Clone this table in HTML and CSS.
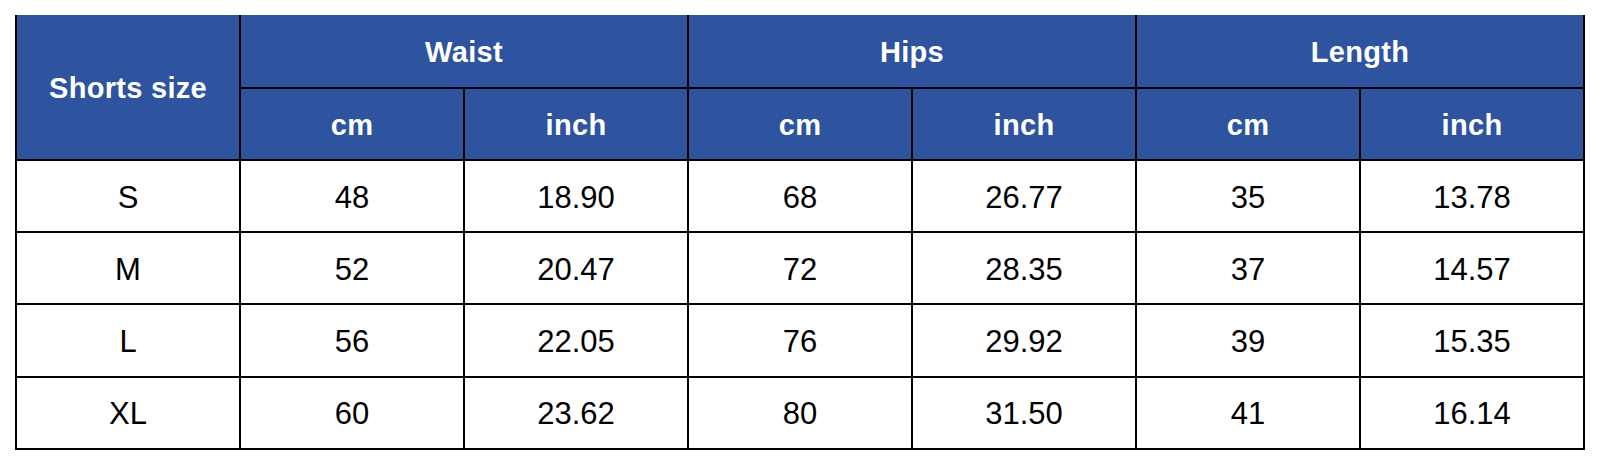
FILE: index.html
```html
<!DOCTYPE html>
<html>
<head>
<meta charset="utf-8">
<link rel="stylesheet" href="styles.css">
</head>
<body>
<table class="size-table">
  <colgroup>
    <col><col><col><col><col><col><col>
  </colgroup>
  <thead>
    <tr class="head-row head-top">
      <th rowspan="2" class="corner">Shorts size</th>
      <th colspan="2">Waist</th>
      <th colspan="2">Hips</th>
      <th colspan="2">Length</th>
    </tr>
    <tr class="head-row">
      <th>cm</th><th>inch</th>
      <th>cm</th><th>inch</th>
      <th>cm</th><th>inch</th>
    </tr>
  </thead>
  <tbody>
    <tr><td>S</td><td>48</td><td>18.90</td><td>68</td><td>26.77</td><td>35</td><td>13.78</td></tr>
    <tr><td>M</td><td>52</td><td>20.47</td><td>72</td><td>28.35</td><td>37</td><td>14.57</td></tr>
    <tr><td>L</td><td>56</td><td>22.05</td><td>76</td><td>29.92</td><td>39</td><td>15.35</td></tr>
    <tr><td>XL</td><td>60</td><td>23.62</td><td>80</td><td>31.50</td><td>41</td><td>16.14</td></tr>
  </tbody>
</table>
</body>
</html>
```

FILE: styles.css
```css
html, body {
  margin: 0;
  padding: 0;
  background: #ffffff;
}

body {
  padding: 15px 0 0 15px;
  font-family: "Liberation Sans", Arial, sans-serif;
}

.size-table {
  border-collapse: collapse;
  table-layout: fixed;
  width: 1570px;
  border-left: 2px solid #000;
  border-right: 2px solid #000;
  border-bottom: 2px solid #000;
  border-top: none;
}

.size-table th,
.size-table td {
  padding: 0;
  text-align: center;
  vertical-align: middle;
  border: 2px solid #000;
}

.size-table thead tr:first-child th {
  border-top: none;
}

.size-table th {
  background: #2e539f;
  color: #ffffff;
  font-weight: bold;
  font-size: 29px;
  letter-spacing: 0.3px;
  padding-top: 2px;
}

.head-row {
  height: 72px;
}

.head-top {
  height: 73px;
}

.size-table td {
  color: #000;
  font-size: 31px;
  height: 67.2px;
  padding-top: 3px;
}
```
